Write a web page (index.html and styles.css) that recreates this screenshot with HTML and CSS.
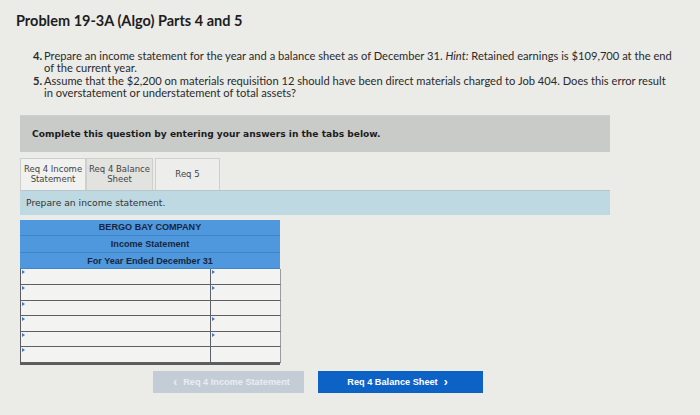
FILE: index.html
```html
<!DOCTYPE html>
<html>
<head>
<meta charset="utf-8">
<link rel="stylesheet" href="styles.css">
</head>
<body>
<div class="page">
  <h1 class="title">Problem 19-3A (Algo) Parts 4 and 5</h1>
  <ol class="steps">
    <li><span class="num">4.</span><span class="txt"><span class="ln">Prepare an income statement for the year and a balance sheet as of December 31. <i>Hint:</i> Retained earnings is $109,700 at the end</span><span class="ln">of the current year.</span></span></li>
    <li><span class="num">5.</span><span class="txt">Assume that the $2,200 on materials requisition 12 should have been direct materials charged to Job 404. Does this error result in overstatement or understatement of total assets?</span></li>
  </ol>
  <div class="complete">Complete this question by entering your answers in the tabs below.</div>
  <div class="tabs">
    <div class="tab active">Req 4 Income<br>Statement</div>
    <div class="tab gray">Req 4 Balance<br>Sheet</div>
    <div class="tab last">Req 5</div>
  </div>
  <div class="prompt">Prepare an income statement.</div>
  <div class="sheet">
    <div class="hdr">BERGO BAY COMPANY</div>
    <div class="hdr">Income Statement</div>
    <div class="hdr">For Year Ended December 31</div>
    <div class="rows">
      <div class="cell l mark"></div><div class="cell r mark"></div>
      <div class="cell l mark"></div><div class="cell r mark"></div>
      <div class="cell l mark"></div><div class="cell r"></div>
      <div class="cell l mark"></div><div class="cell r mark"></div>
      <div class="cell l mark"></div><div class="cell r mark"></div>
      <div class="cell l mark"></div><div class="cell r"></div>
    </div>
  </div>
  <div class="nav">
    <div class="btn prev"><span class="chev">&lsaquo;</span> Req 4 Income Statement</div>
    <div class="btn next">Req 4 Balance Sheet <span class="chev">&rsaquo;</span></div>
  </div>
</div>
</body>
</html>
```

FILE: styles.css
```css
html, body {
  margin: 0;
  padding: 0;
  background: #ebebe8;
}
.page {
  width: 700px;
  height: 415px;
  box-sizing: border-box;
  padding: 12px 0 0 20px;
  font-family: "Lato", "Liberation Sans", sans-serif;
  color: #222;
  overflow: hidden;
}
.title {
  margin: 0 0 0 -4px;
  font-size: 14.5px;
  font-weight: 700;
  line-height: 17px;
  color: #1d1d1d;
}
.steps {
  list-style: none;
  margin: 21px 0 0 13px;
  padding: 0;
  font-size: 11.15px;
  line-height: 12.4px;
  color: #2a2a2a;
}
.steps li {
  display: flex;
}
.num {
  font-weight: 700;
  width: 11px;
  flex: none;
}
.txt {
  width: 628px;
}
.ln {
  display: block;
  white-space: nowrap;
}
.complete {
  margin-top: 15px;
  width: 590px;
  height: 37px;
  box-sizing: border-box;
  background: #c9cbc8;
  border-top: 1px solid #d0d0d4;
  padding: 0 12px;
  display: flex;
  align-items: center;
  font-family: "DejaVu Sans", Verdana, sans-serif;
  font-weight: 700;
  font-size: 9.1px;
  color: #1c1c1c;
}
.tabs {
  display: flex;
  margin-top: 6px;
  height: 32px;
}
.tab {
  box-sizing: border-box;
  height: 32px;
  border: 1px solid #cfcfcd;
  border-bottom: none;
  display: flex;
  align-items: center;
  justify-content: center;
  text-align: center;
  font-family: "DejaVu Sans", Verdana, sans-serif;
  font-size: 8.5px;
  line-height: 10px;
  color: #444;
  white-space: nowrap;
}
.tab.active {
  width: 66px;
  background: #f1f1ef;
}
.tab.gray {
  width: 67px;
  background: #e2e2df;
}
.tab.last {
  width: 65px;
  margin-left: 2px;
  background: #ededeb;
}
.prompt {
  width: 590px;
  height: 25px;
  box-sizing: border-box;
  background: #bed9e2;
  border-top: 1px solid #b9c4cc;
  padding: 0 6px;
  display: flex;
  align-items: center;
  font-family: "DejaVu Sans", Verdana, sans-serif;
  font-size: 9.2px;
  color: #333;
}
.sheet {
  margin-top: 5px;
  width: 260px;
}
.hdr {
  height: 16.6px;
  box-sizing: border-box;
  background: #4f98dd;
  border-bottom: 1px solid #3f85c8;
  display: flex;
  align-items: center;
  justify-content: center;
  font-family: "Liberation Sans", Arial, sans-serif;
  font-weight: 700;
  font-size: 9.1px;
  color: #16263d;
}
.hdr:last-of-type {
  border-bottom: none;
}
.rows {
  display: grid;
  grid-template-columns: 190px 70px;
  border-bottom: 2px solid #5a5c60;
  border-left: 1.5px solid #5a5c60;
}
.cell {
  height: 15.6px;
  box-sizing: border-box;
  background: #f3f3f1;
  border-bottom: 1.5px solid #5d6066;
  position: relative;
}
.cell.l {
  border-right: 1.5px solid #5d6066;
}
.cell.r {
  border-right: 1px solid #9a9ca0;
}
.cell.mark::before {
  content: "";
  position: absolute;
  left: 1px;
  top: 1px;
  border-left: 3px solid #4a79b8;
  border-top: 2px solid transparent;
  border-bottom: 2px solid transparent;
}
.nav {
  display: flex;
  margin: 6px 0 0 133px;
  gap: 14px;
}
.btn {
  height: 22px;
  display: flex;
  align-items: center;
  justify-content: center;
  font-family: "Liberation Sans", Arial, sans-serif;
  font-weight: 700;
  font-size: 9.2px;
}
.btn.prev {
  width: 151px;
  background: #c4ccd6;
  color: #e9edf2;
}
.btn.next {
  width: 165px;
  background: #0d62c6;
  color: #ffffff;
}
.chev {
  font-size: 12px;
  margin: 0 6px;
  line-height: 10px;
}
```
